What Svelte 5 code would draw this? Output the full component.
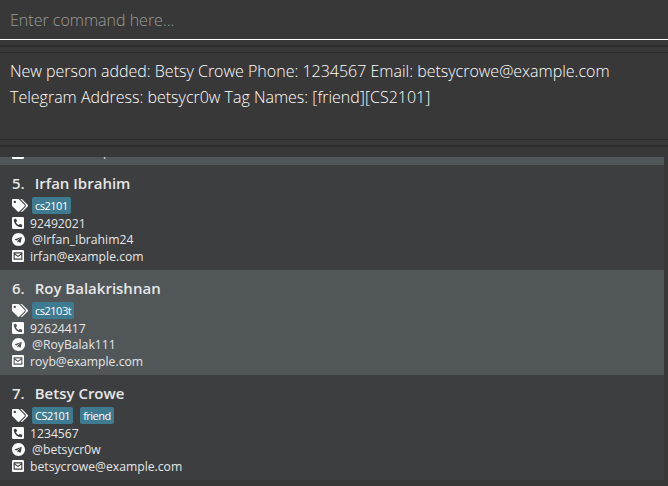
<script lang="ts">
  const people = [
    { id: 5, name: "Irfan Ibrahim", tags: ["cs2101"], phone: "92492021", telegram: "@Irfan_Ibrahim24", email: "irfan@example.com" },
    { id: 6, name: "Roy Balakrishnan", tags: ["cs2103t"], phone: "92624417", telegram: "@RoyBalak111", email: "royb@example.com" },
    { id: 7, name: "Betsy Crowe", tags: ["CS2101", "friend"], phone: "1234567", telegram: "@betsycr0w", email: "betsycrowe@example.com" },
  ];
</script>

{#snippet mailIcon()}
  <svg viewBox="0 32 448 448" width="12" height="12" aria-hidden="true">
    <path fill="#fff" fill-rule="evenodd" d="M48 32h352a48 48 0 0 1 48 48v352a48 48 0 0 1-48 48H48a48 48 0 0 1-48-48V80a48 48 0 0 1 48-48zM60 120v272h328V120zM108 160h232L224 244zM100 206L224 296 348 206V352H100z" />
  </svg>
{/snippet}

<div class="window">
  <div class="command">
    <input type="text" placeholder="Enter command here..." />
  </div>
  <div class="band"></div>
  <div class="result">
    <p>New person added: Betsy Crowe Phone: 1234567 Email: betsycrowe@example.com</p>
    <p>Telegram Address: betsycr0w Tag Names: [friend][CS2101]</p>
  </div>
  <div class="band"></div>
  <div class="list">
    <!-- previous card, scrolled almost out of view -->
    <div class="stub">
      <div class="line">
        {@render mailIcon()}
        <span>david@example.com</span>
      </div>
    </div>
    {#each people as person, i (person.id)}
      <div class="card" class:odd={i % 2 === 1}>
        <div class="name">
          <span class="num">{person.id}.</span>
          <span>{person.name}</span>
        </div>
        <div class="tags">
          <svg viewBox="0 0 640 512" width="16" height="13" aria-hidden="true">
            <path fill="#fff" d="M497.9 225.900L286.100 14.100A48 48 0 0 0 252.100 0H48C21.500 0 0 21.500 0 48v204.100a48 48 0 0 0 14.100 33.900l211.900 211.900c18.700 18.700 49.100 18.700 67.900 0l204.100-204.100c18.700-18.700 18.700-49.100-.1-67.900zM112 160c-26.500 0-48-21.500-48-48s21.500-48 48-48 48 21.500 48 48-21.500 48-48 48zm513.900 133.800L421.800 497.900c-18.700 18.700-49.100 18.700-67.900 0l-.4-.4L527.600 323.500c17-17 26.400-39.600 26.400-63.600s-9.400-46.600-26.400-63.600L331.400 0h48.700a48 48 0 0 1 33.900 14.100l211.900 211.900c18.700 18.700 18.700 49.100 0 67.800z" />
          </svg>
          {#each person.tags as tag}
            <span class="tag">{tag}</span>
          {/each}
        </div>
        <div class="line">
          <svg viewBox="0 32 448 448" width="12" height="12" aria-hidden="true">
            <path fill="#fff" d="M400 32H48A48 48 0 0 0 0 80v352a48 48 0 0 0 48 48h352a48 48 0 0 0 48-48V80a48 48 0 0 0-48-48zm-16.390 307.370l-15 65A15 15 0 0 1 354 416C194 416 64 286.290 64 126a15.700 15.700 0 0 1 11.630-14.610l65-15A18.230 18.230 0 0 1 144 96a16.270 16.270 0 0 1 13.790 9.090l30 70A17.900 17.900 0 0 1 189 181a17 17 0 0 1-5.500 11.610l-37.890 31a231.910 231.910 0 0 0 110.780 110.780l31-37.890A17 17 0 0 1 299 291a17.850 17.850 0 0 1 5.910 1.210l70 30A16.250 16.250 0 0 1 384 336a17.410 17.410 0 0 1-.39 3.370z" />
          </svg>
          <span>{person.phone}</span>
        </div>
        <div class="line handle">
          <svg viewBox="0 8 496 496" width="13" height="13" aria-hidden="true">
            <path fill="#fff" d="M248 8C111 8 0 119 0 256s111 248 248 248 248-111 248-248S385 8 248 8zm121.800 169.900l-40.700 191.800c-3 13.600-11.100 16.900-22.400 10.500l-62-45.700-29.900 28.800c-3.300 3.300-6.100 6.100-12.500 6.100l4.400-63.100 114.900-103.800c5-4.400-1.100-6.900-7.700-2.500l-142 89.400-61.200-19.100c-13.300-4.200-13.600-13.300 2.800-19.700l239.100-92.200c11.100-4 20.800 2.700 16.200 21.500z" />
          </svg>
          <span>{person.telegram}</span>
        </div>
        <div class="line">
          {@render mailIcon()}
          <span>{person.email}</span>
        </div>
      </div>
    {/each}
  </div>
</div>

<style>
  :global(body) {
    margin: 0;
    background: #383838;
  }

  .window {
    width: 668px;
    height: 486px;
    overflow: hidden;
    background: #383838;
    font-family: "Open Sans", "Noto Sans", sans-serif;
  }

  .command {
    border-bottom: 1px solid #fff;
  }

  .command input {
    display: block;
    width: 100%;
    height: 39px;
    box-sizing: border-box;
    padding: 0 10px;
    border: none;
    outline: none;
    background: transparent;
    font: 300 16px "Open Sans", sans-serif;
    color: #fff;
  }

  .command input::placeholder {
    color: #9a9a9a;
    opacity: 1;
  }

  .band {
    height: 2px;
    margin: 5px 0;
    background: #2b2b2b;
  }

  .result {
    height: 88px;
    box-sizing: border-box;
    padding: 5px 10px 0;
    border-top: 1px solid #2d2d2d;
    border-bottom: 1px solid #2d2d2d;
    font-size: 16px;
    font-weight: 300;
    line-height: 26px;
    color: #fff;
  }

  .result p {
    margin: 0;
    white-space: nowrap;
  }

  .list {
    margin-top: 10px;
    height: 329px;
    overflow: hidden;
    padding-right: 4px;
  }

  .stub {
    height: 8px;
    box-sizing: border-box;
    display: flex;
    flex-direction: column;
    justify-content: flex-end;
    overflow: hidden;
    padding: 0 12px 4px;
    background: #515658;
  }

  .stub .line {
    flex: none;
  }

  .stub .line span {
    margin-bottom: 3px;
  }

  .card {
    height: 105px;
    box-sizing: border-box;
    padding: 7px 12px 0;
    background: #3c3e3f;
    color: #fff;
  }

  .card.odd {
    background: #515658;
  }

  .name {
    display: flex;
    gap: 10px;
    height: 21px;
    align-items: center;
    font-size: 15px;
    font-weight: 600;
    color: #e6e6e6;
  }

  .tags {
    display: flex;
    align-items: center;
    gap: 7px;
    height: 18px;
    margin: 3px 0 1px;
  }

  .tags svg {
    margin-right: -3px;
  }

  .tag {
    padding: 0 3px;
    height: 17px;
    line-height: 17px;
    border-radius: 2px;
    background: #3e7b91;
    font-size: 11px;
    letter-spacing: -0.5px;
    color: #fff;
  }

  .line {
    display: flex;
    align-items: center;
    gap: 6px;
    height: 16.5px;
    font-size: 12.2px;
    color: #e6e6e6;
  }

  .line.handle {
    gap: 7px;
  }
</style>
